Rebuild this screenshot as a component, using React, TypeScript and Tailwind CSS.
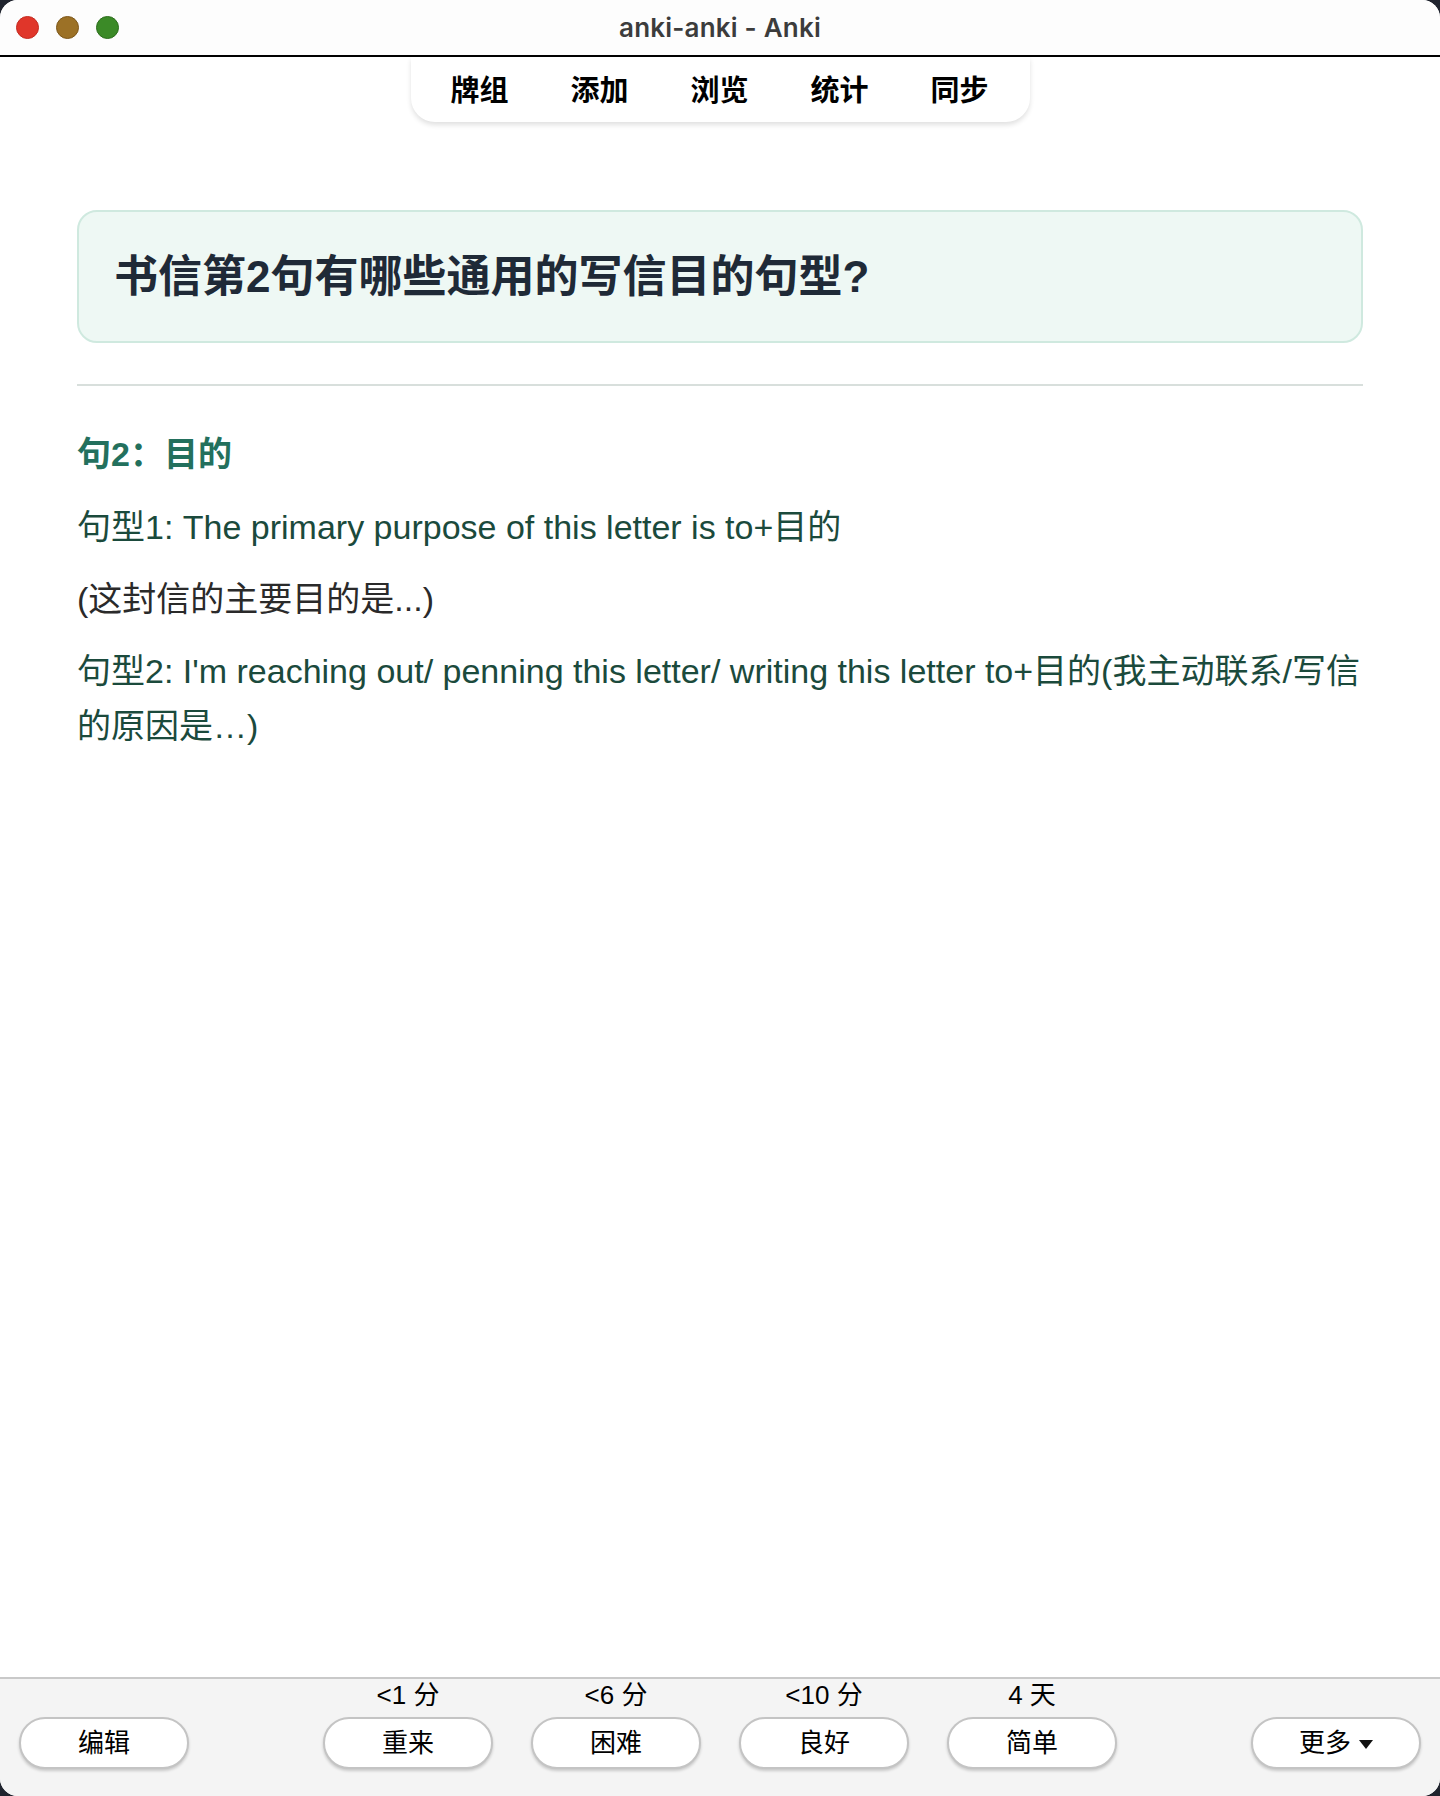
import React from "react";

const CJK = "font-['Liberation_Sans','Noto_Sans_CJK_SC',sans-serif]";

function Dot({ color, ring }: { color: string; ring: string }) {
  return (
    <span
      className={`block w-[23px] h-[23px] rounded-full border ${color} ${ring}`}
    />
  );
}

function AnswerCol({ label, text }: { label: string; text: string }) {
  return (
    <div className="flex flex-col items-center w-[170px]">
      <div className={`h-[38px] text-[26px] leading-[32px] text-black ${CJK}`}>{label}</div>
      <Btn text={text} />
    </div>
  );
}

function Btn({ text, caret }: { text: string; caret?: boolean }) {
  return (
    <button
      className={`w-[170px] h-[52px] rounded-full bg-white border-2 border-[#c4c4c4] shadow-[0_2px_3px_rgba(0,0,0,0.18)] flex items-center justify-center gap-[8px] text-[26px] text-black ${CJK}`}
    >
      <span>{text}</span>
      {caret && (
        <svg width="14" height="9" viewBox="0 0 14 9" className="mt-[3px]">
          <path d="M0 0 L14 0 L7 9 Z" fill="#111" />
        </svg>
      )}
    </button>
  );
}

export default function App() {
  const navItems = ["牌组", "添加", "浏览", "统计", "同步"];
  return (
    <div className="w-[1440px] h-[1796px] bg-[#20242e]">
      <div className="w-full h-full rounded-[18px] overflow-hidden bg-white flex flex-col">
        {/* Title bar */}
        <div className="h-[57px] shrink-0 border-b-2 border-black bg-[#fdfdfd] grid grid-cols-[1fr_auto_1fr] items-center">
          <div className="flex items-center gap-[17px] pl-[16px]">
            <Dot color="bg-[#e0362a]" ring="border-[#c42b20]" />
            <Dot color="bg-[#9c7126]" ring="border-[#7d571a]" />
            <Dot color="bg-[#3b8a27]" ring="border-[#2c6d1c]" />
          </div>
          <div className="text-[26px] font-semibold text-[#3c3c3c] font-['Inter',sans-serif] tracking-[0.2px]">
            anki-anki - Anki
          </div>
          <div />
        </div>

        {/* Main */}
        <div className="flex-1 flex flex-col">
          <div className="flex justify-center">
            <nav className="w-[619px] h-[65px] px-[9px] pt-[4px] flex items-center rounded-b-[24px] bg-white shadow-[0_3px_5px_rgba(0,0,0,0.12)]">
              {navItems.map((n) => (
                <span
                  key={n}
                  className={`w-[120px] text-center text-[29px] font-bold text-black ${CJK}`}
                >
                  {n}
                </span>
              ))}
            </nav>
          </div>

          <div className="px-[77px] pt-[88px]">
            <div className="h-[133px] rounded-[20px] border-2 border-[#cfe9df] bg-[#eef8f4] flex items-center px-[35px]">
              <h1 className={`text-[44px] font-bold text-[#1f2a37] leading-none ${CJK}`}>
                书信第2句有哪些通用的写信目的句型?
              </h1>
            </div>

            <div className="mt-[41px] h-[2px] bg-[#d8dfdc]" />

            <div className={`mt-[43px] ${CJK}`}>
              <div className="text-[34px] leading-[51px] font-bold text-[#23705d]">句2：目的</div>
              <p className="mt-[20px] text-[34px] leading-[55px] text-[#1b4a3c]">
                句型1: The primary purpose of this letter is to+目的
              </p>
              <p className="mt-[17px] text-[34px] leading-[55px] text-[#2a2a2a]">
                (这封信的主要目的是...)
              </p>
              <p className="mt-[17px] text-[34px] leading-[55px] text-[#1b4a3c]">
                句型2: I'm reaching out/ penning this letter/ writing this letter to+目的(我主动联系/写信的原因是…)
              </p>
            </div>
          </div>
        </div>

        {/* Bottom bar */}
        <div className="h-[119px] shrink-0 border-t-2 border-[#c9c9c9] bg-[#f4f4f4] grid grid-cols-[1fr_auto_1fr] items-start px-[19px]">
          <div className="pt-[38px]">
            <Btn text="编辑" />
          </div>
          <div className="flex gap-[38px]">
            <AnswerCol label="<1 分" text="重来" />
            <AnswerCol label="<6 分" text="困难" />
            <AnswerCol label="<10 分" text="良好" />
            <AnswerCol label="4 天" text="简单" />
          </div>
          <div className="pt-[38px] flex justify-end">
            <Btn text="更多" caret />
          </div>
        </div>
      </div>
    </div>
  );
}
